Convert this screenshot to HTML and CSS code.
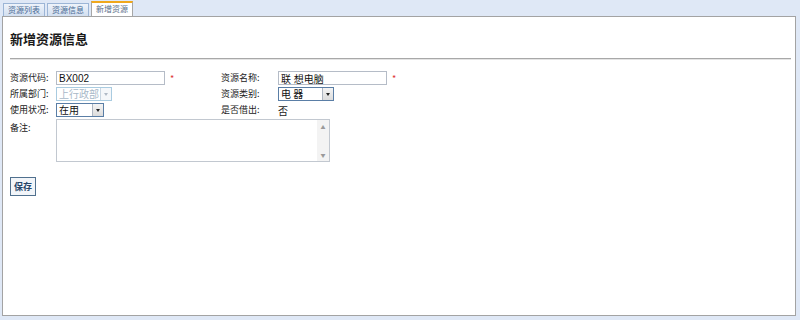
FILE: index.html
```html
<!DOCTYPE html>
<html lang="zh-CN">

<head>
  <meta charset="UTF-8">
  <title>新增资源</title>
  <link rel="stylesheet" href="styles.css">
</head>

<body>
  <div class="tabs">
    <a class="tab">资源列表</a>
    <a class="tab">资源信息</a>
    <a class="tab active">新增资源</a>
  </div>

  <div class="panel">
    <h2 class="title">新增资源信息</h2>
    <div class="rule"></div>

    <form class="form">
      <label class="lbl">资源代码:</label>
      <div class="field">
        <input class="text" type="text" value="BX002"><span class="req">*</span>
      </div>
      <label class="lbl">资源名称:</label>
      <div class="field">
        <input class="text" type="text" value="联 想电脑"><span class="req">*</span>
      </div>

      <label class="lbl">所属部门:</label>
      <div class="field">
        <span class="select disabled"><span class="val">上行政部</span><span class="arrow"></span></span>
      </div>
      <label class="lbl">资源类别:</label>
      <div class="field">
        <span class="select"><span class="val">电 器</span><span class="arrow"></span></span>
      </div>

      <label class="lbl">使用状况:</label>
      <div class="field">
        <span class="select small"><span class="val">在用</span><span class="arrow"></span></span>
      </div>
      <label class="lbl">是否借出:</label>
      <div class="field plain">否</div>

      <label class="lbl memo-lbl">备注:</label>
      <div class="field wide">
        <div class="memo">
          <textarea></textarea>
          <div class="scroll"><span>&#9650;</span><span>&#9660;</span></div>
        </div>
      </div>
    </form>

    <button type="button" class="save">保存</button>
  </div>
</body>

</html>
```

FILE: styles.css
```css
body {
  margin: 0;
  background-color: #dfe8f6;
  font-family: "Noto Sans CJK SC", "Liberation Sans", sans-serif;
  font-size: 9px;
  color: #222;
  height: 320px;
  overflow: hidden;
}

.tabs {
  display: flex;
  gap: 2px;
  padding: 3px 0 0 3px;
  height: 13px;
  align-items: flex-end;
}

.tab {
  display: block;
  width: 40px;
  height: 12px;
  line-height: 12px;
  text-align: center;
  font-size: 8px;
  color: #4a6a94;
  background: linear-gradient(#eef3fa, #d2dff0);
  border: 1px solid #9cb5d6;
  border-bottom: none;
}

.tab.active {
  height: 13px;
  background: #fff;
  border-color: #a7a7a7;
  border-top: 2px solid #f0a81c;
  color: #5a6f8a;
}

.panel {
  margin: 0 4px 0 2px;
  height: 300px;
  background-color: #fff;
  border: 1px solid #a3a3a3;
  padding: 0 4px 0 7px;
  box-sizing: border-box;
}

.title {
  margin: 0;
  padding-top: 13px;
  height: 22px;
  font-size: 13px;
  font-weight: bold;
  line-height: 18px;
  color: #1a1a1a;
}

.rule {
  height: 1px;
  margin-top: 6px;
  background-color: #a8a8a8;
  border-bottom: 1px solid #e4e4e4;
}

.form {
  display: grid;
  grid-template-columns: 46px 165px 57px 1fr;
  grid-auto-rows: 16px;
  margin-top: 10px;
  align-items: center;
}

.lbl {
  font-size: 9px;
  line-height: 12px;
}

.lbl.memo-lbl {
  align-self: start;
  margin-top: 4px;
}

.field {
  display: flex;
  align-items: center;
}

.field.plain {
  font-size: 10px;
}

.field.wide {
  grid-column: 2 / 5;
  grid-row: span 3;
  align-self: start;
}

.text {
  width: 109px;
  height: 14px;
  box-sizing: border-box;
  border: 1px solid #b5bcc7;
  padding: 0 2px;
  font-family: "Liberation Sans", "Noto Sans CJK SC", sans-serif;
  font-size: 10px;
  color: #111;
  outline: none;
}

.req {
  color: #d33;
  font-size: 9px;
  margin-left: 5px;
}

.select {
  display: flex;
  width: 56px;
  height: 14px;
  box-sizing: border-box;
  border: 1px solid #5a7ea6;
  background: #fff;
}

.select.small {
  width: 48px;
}

.select .val {
  flex: 1;
  padding-left: 2px;
  font-size: 10px;
  line-height: 12px;
  color: #111;
}

.select .arrow {
  width: 10px;
  border-left: 1px solid #aeb6c2;
  background: linear-gradient(#f4f4f4, #dcdcdc);
  position: relative;
}

.select .arrow::after {
  content: "";
  position: absolute;
  left: 3px;
  top: 5px;
  border: 2px solid transparent;
  border-top: 3px solid #222;
}

.select.disabled {
  border-color: #a9cbe0;
}

.select.disabled .val {
  color: #a8b8c8;
}

.select.disabled .arrow {
  background: #f5f7fa;
  border-left-color: #c9d6e2;
}

.select.disabled .arrow::after {
  border-top-color: #b0bac6;
}

.memo {
  display: flex;
  width: 274px;
  height: 43px;
  box-sizing: border-box;
  border: 1px solid #c2c8d0;
  margin-top: 1px;
}

.memo textarea {
  flex: 1;
  border: none;
  resize: none;
  outline: none;
  padding: 0;
}

.scroll {
  width: 12px;
  display: flex;
  flex-direction: column;
  justify-content: space-between;
  align-items: center;
  background-color: #f3f3f3;
  font-size: 5px;
  color: #9a9a9a;
  padding: 3px 0;
}

.save {
  display: block;
  margin-top: 11px;
  width: 26px;
  height: 19px;
  padding: 0;
  border: 1px solid #50708e;
  background-color: #f2f5f9;
  font-family: "Noto Sans CJK SC", serif;
  font-size: 9px;
  font-weight: bold;
  color: #26466a;
}
```
